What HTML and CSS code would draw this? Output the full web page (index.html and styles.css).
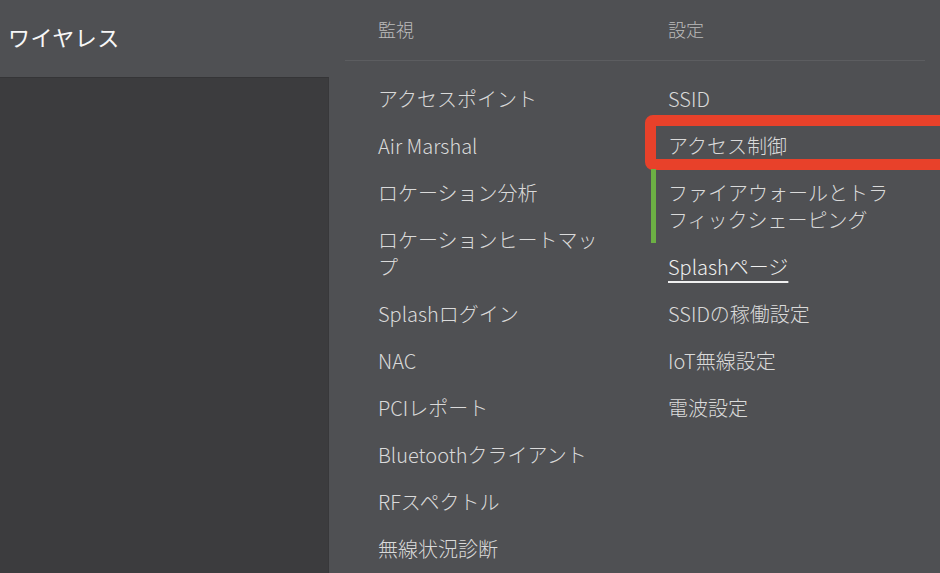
FILE: index.html
```html
<!DOCTYPE html>
<html lang="ja">
<head>
  <meta charset="UTF-8">
  <meta name="viewport" content="width=device-width, initial-scale=1.0">
  <title>ワイヤレス</title>
  <link rel="stylesheet" href="styles.css">
</head>
<body>
  <div class="page">
    <aside class="side">
      <h1 class="side-title">ワイヤレス</h1>
      <div class="side-panel"></div>
    </aside>

    <!-- Wireless dropdown menu -->
    <nav class="menu">
      <div class="menu-head">
        <div class="menu-col">監視</div>
        <div class="menu-col">設定</div>
      </div>
      <div class="menu-body">
        <ul class="menu-col">
          <li>アクセスポイント</li>
          <li>Air Marshal</li>
          <li>ロケーション分析</li>
          <li>ロケーションヒートマップ</li>
          <li>Splashログイン</li>
          <li>NAC</li>
          <li>PCIレポート</li>
          <li>Bluetoothクライアント</li>
          <li>RFスペクトル</li>
          <li>無線状況診断</li>
        </ul>
        <ul class="menu-col">
          <li>SSID</li>
          <li class="marked">アクセス制御<span class="mark"></span></li>
          <li class="current">ファイアウォールとトラフィックシェーピング</li>
          <li><span class="link">Splashページ</span></li>
          <li>SSIDの稼働設定</li>
          <li>IoT無線設定</li>
          <li>電波設定</li>
        </ul>
      </div>
    </nav>
  </div>
</body>
</html>
```

FILE: styles.css
```css
html, body {
  margin: 0;
  padding: 0;
  height: 100%;
}

body {
  font-family: "Noto Sans CJK JP", "Noto Sans", sans-serif;
  background-color: #4f5053;
  color: #dadada;
  overflow: hidden;
}

.page {
  display: flex;
  height: 573px;
}

.side {
  width: 329px;
  display: flex;
  flex-direction: column;
}

.side-title {
  margin: 0;
  height: 77px;
  padding: 20px 0 0 8px;
  box-sizing: border-box;
  font-size: 22px;
  font-weight: 400;
  line-height: 32px;
  color: #f7f7f7;
  letter-spacing: 0.5px;
}

.side-panel {
  flex: 1;
  background-color: #3c3c3e;
  border-top: 1px solid #353537;
  border-right: 1px solid #38383a;
}

.menu {
  flex: 1;
  padding: 16px 15px 0 16px;
}

.menu-head {
  display: flex;
  gap: 60px;
  padding: 0 0 17px 33px;
  border-bottom: 1px solid #5c5d60;
  font-size: 18px;
  font-weight: 300;
  line-height: 27px;
  color: #bcbcbc;
}

.menu-col {
  width: 230px;
}

.menu-body {
  display: flex;
  gap: 60px;
  padding: 14px 0 0 33px;
}

.menu-body ul {
  list-style: none;
  margin: 0;
  padding: 0;
}

.menu-body li {
  position: relative;
  padding: 10px 0;
  font-size: 20px;
  font-weight: 300;
  line-height: 27px;
}

.menu-body li.current {
  margin-left: -17px;
  padding-left: 12px;
  border-left: 5px solid #6cb044;
}

.link {
  color: #f0f0f0;
  text-decoration: underline;
  text-decoration-thickness: 2px;
  text-underline-offset: 6px;
}

.mark {
  position: absolute;
  top: -7px;
  left: -23px;
  right: -80px;
  bottom: -1px;
  border: 11px solid #e8412a;
  border-radius: 8px;
}
```
